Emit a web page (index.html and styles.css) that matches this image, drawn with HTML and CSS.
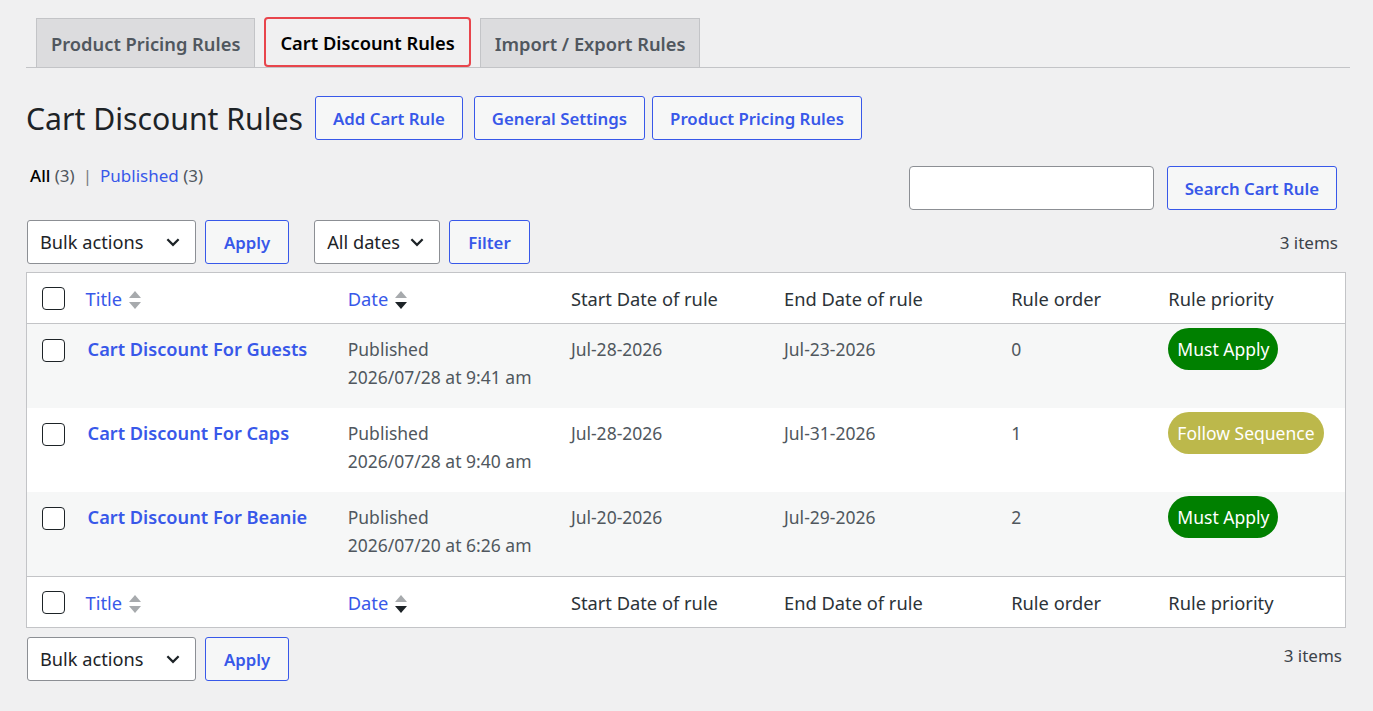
FILE: index.html
```html
<!DOCTYPE html>
<html lang="en">
<head>
  <meta charset="UTF-8" />
  <meta name="viewport" content="width=device-width, initial-scale=1.0"/>
  <title>Cart Discount Rules</title>
  <link rel="stylesheet" href="styles.css">
</head>
<body>
<div class="wrap">

  <!-- TABS -->
  <nav class="tabs">
    <a class="tab">Product Pricing Rules</a>
    <a class="tab tab-active">Cart Discount Rules</a>
    <a class="tab">Import / Export Rules</a>
  </nav>

  <!-- HEADING -->
  <div class="head">
    <h1>Cart Discount Rules</h1>
    <a class="btn">Add Cart Rule</a>
    <a class="btn">General Settings</a>
    <a class="btn">Product Pricing Rules</a>
  </div>

  <div class="views-row">
    <ul class="views">
      <li><b>All</b> <span class="count">(3)</span></li>
      <li class="sep">|</li>
      <li><a>Published</a> <span class="count">(3)</span></li>
    </ul>
    <div class="search">
      <input type="text" class="search-input">
      <a class="btn">Search Cart Rule</a>
    </div>
  </div>

  <!-- TOP NAV -->
  <div class="tablenav">
    <div class="actions">
      <div class="select sel-bulk">Bulk actions <svg class="chev" viewBox="0 0 16 16"><path d="M3 5.5l5 5 5-5" fill="none" stroke="#1d2327" stroke-width="2"/></svg></div>
      <a class="btn btn-sm">Apply</a>
      <div class="select sel-dates">All dates <svg class="chev" viewBox="0 0 16 16"><path d="M3 5.5l5 5 5-5" fill="none" stroke="#1d2327" stroke-width="2"/></svg></div>
      <a class="btn btn-sm">Filter</a>
    </div>
    <div class="num">3 items</div>
  </div>

  <!-- TABLE -->
  <table class="list">
    <colgroup>
      <col style="width:49px"><col style="width:262px"><col style="width:223px"><col style="width:213px"><col style="width:227px"><col style="width:157px"><col style="width:187px">
    </colgroup>
    <thead>
      <tr>
        <th class="cb"><span class="box"></span></th>
        <th><a>Title</a> <svg class="sort" viewBox="0 0 12 20"><path d="M6 1l6 7H0z" fill="#a7aaad"/><path d="M6 19l6-7H0z" fill="#a7aaad"/></svg></th>
        <th><a>Date</a> <svg class="sort" viewBox="0 0 12 20"><path d="M6 1l6 7H0z" fill="#a7aaad"/><path d="M6 19l6-7H0z" fill="#1d2327"/></svg></th>
        <th>Start Date of rule</th>
        <th>End Date of rule</th>
        <th>Rule order</th>
        <th>Rule priority</th>
      </tr>
    </thead>
    <tbody>
      <tr class="alt">
        <td class="cb"><span class="box"></span></td>
        <td><a class="row-title">Cart Discount For Guests</a></td>
        <td class="muted">Published<br>2026/07/28 at 9:41 am</td>
        <td class="muted">Jul-28-2026</td>
        <td class="muted">Jul-23-2026</td>
        <td class="muted">0</td>
        <td><span class="badge must">Must Apply</span></td>
      </tr>
      <tr>
        <td class="cb"><span class="box"></span></td>
        <td><a class="row-title">Cart Discount For Caps</a></td>
        <td class="muted">Published<br>2026/07/28 at 9:40 am</td>
        <td class="muted">Jul-28-2026</td>
        <td class="muted">Jul-31-2026</td>
        <td class="muted">1</td>
        <td><span class="badge follow">Follow Sequence</span></td>
      </tr>
      <tr class="alt">
        <td class="cb"><span class="box"></span></td>
        <td><a class="row-title">Cart Discount For Beanie</a></td>
        <td class="muted">Published<br>2026/07/20 at 6:26 am</td>
        <td class="muted">Jul-20-2026</td>
        <td class="muted">Jul-29-2026</td>
        <td class="muted">2</td>
        <td><span class="badge must">Must Apply</span></td>
      </tr>
    </tbody>
    <tfoot>
      <tr>
        <th class="cb"><span class="box"></span></th>
        <th><a>Title</a> <svg class="sort" viewBox="0 0 12 20"><path d="M6 1l6 7H0z" fill="#a7aaad"/><path d="M6 19l6-7H0z" fill="#a7aaad"/></svg></th>
        <th><a>Date</a> <svg class="sort" viewBox="0 0 12 20"><path d="M6 1l6 7H0z" fill="#a7aaad"/><path d="M6 19l6-7H0z" fill="#1d2327"/></svg></th>
        <th>Start Date of rule</th>
        <th>End Date of rule</th>
        <th>Rule order</th>
        <th>Rule priority</th>
      </tr>
    </tfoot>
  </table>

  <!-- BOTTOM NAV -->
  <div class="tablenav tablenav-bottom">
    <div class="actions">
      <div class="select sel-bulk">Bulk actions <svg class="chev" viewBox="0 0 16 16"><path d="M3 5.5l5 5 5-5" fill="none" stroke="#1d2327" stroke-width="2"/></svg></div>
      <a class="btn btn-sm">Apply</a>
    </div>
    <div class="num">3 items</div>
  </div>

</div>
</body>
</html>
```

FILE: styles.css
```css
body {
  font-family: "Noto Sans", "Open Sans", sans-serif;
  font-size: 17px;
  color: #3c434a;
  background-color: #f0f0f1;
  margin: 0;
}

a {
  color: #3858e9;
  text-decoration: none;
}

.wrap {
  padding: 18px 23px 0 26px;
}

/* tabs */
.tabs {
  display: flex;
  gap: 9px;
  padding-left: 10px;
  border-bottom: 1px solid #c3c4c7;
}

.tab {
  height: 49px;
  box-sizing: border-box;
  padding: 0 14px;
  display: flex;
  align-items: center;
  background: #dcdcde;
  border: 1px solid #c3c4c7;
  border-bottom: none;
  color: #50575e;
  font-weight: 600;
  font-size: 18.3px;
  margin-bottom: -1px;
}

.tab-active {
  background: #f0f0f1;
  color: #000;
  border: 2px solid #e8454c;
  border-radius: 4px;
  margin-bottom: 0;
  height: 50px;
  margin-top: -1px;
}

/* heading */
.head {
  display: flex;
  align-items: center;
  gap: 11px;
  margin-top: 28px;
}

h1 {
  font-size: 30.2px;
  font-weight: 400;
  color: #1d2327;
  margin: 0 1px 0 0;
}

.btn {
  display: inline-flex;
  align-items: center;
  height: 44px;
  box-sizing: border-box;
  padding: 0 17px;
  border: 1px solid #3858e9;
  border-radius: 3px;
  background: #f6f7f7;
  color: #3858e9;
  font-weight: 600;
  font-size: 16.8px;
}

.head .btn:last-child {
  margin-left: -4px;
}

.btn-sm {
  padding: 0 18px;
}

/* views + search */
.views-row {
  display: flex;
  justify-content: space-between;
  margin-top: 26px;
}

.views {
  list-style: none;
  margin: 0;
  padding: 0 0 0 4px;
  display: flex;
  gap: 8px;
  font-size: 17px;
  line-height: 20px;
}

.views b {
  color: #000;
  font-weight: 500;
}

.count {
  color: #50575e;
}

.sep {
  color: #787c82;
}

.search {
  display: flex;
  gap: 13px;
  margin-right: 13px;
}

.search-input {
  width: 245px;
  height: 44px;
  box-sizing: border-box;
  border: 1px solid #8c8f94;
  border-radius: 4px;
  background: #fff;
}

/* tablenav */
.tablenav {
  display: flex;
  justify-content: space-between;
  align-items: center;
  margin-top: 10px;
  height: 44px;
}

.actions {
  display: flex;
  gap: 9px;
  padding-left: 1px;
}

.select {
  display: flex;
  align-items: center;
  justify-content: space-between;
  height: 44px;
  box-sizing: border-box;
  background: #fff;
  border: 1px solid #8c8f94;
  border-radius: 3px;
  padding: 0 13px 0 12px;
  color: #1d2327;
  font-size: 18.2px;
}

.sel-bulk {
  width: 169px;
}

.sel-dates {
  width: 126px;
  margin-left: 16px;
}

.chev {
  width: 18px;
  height: 18px;
}

.num {
  font-size: 17px;
  color: #3c434a;
  margin-right: 12px;
}

.tablenav-bottom {
  margin-top: 9px;
}

.tablenav-bottom .num {
  margin-right: 8px;
  align-self: flex-start;
  margin-top: 7px;
}

/* table */
.list {
  width: 1320px;
  margin-top: 8px;
  border-collapse: collapse;
  table-layout: fixed;
  background: #fff;
  border: 1px solid #c3c4c7;
}

.list th {
  text-align: left;
  font-weight: 400;
  color: #2c3338;
  height: 50px;
  padding: 0 10px;
  font-size: 18.3px;
  white-space: nowrap;
}

.list thead tr {
  border-bottom: 1px solid #c3c4c7;
}

.list tfoot tr {
  border-top: 1px solid #c3c4c7;
}

.list td {
  vertical-align: top;
  padding: 11px 10px 0;
  height: 73px;
  line-height: 28px;
  font-size: 17.5px;
}

.list tr.alt td {
  background: #f6f7f7;
}

.list .cb {
  padding-left: 15px;
  padding-right: 0;
}

.box {
  display: block;
  width: 21px;
  height: 21px;
  border: 1px solid #1d2327;
  border-radius: 4px;
  background: #fff;
}

.list td .box {
  margin-top: 4px;
}

.list th .box {
  margin-top: 1px;
}

.sort {
  width: 12px;
  height: 20px;
  vertical-align: -4px;
  margin-left: 2px;
}

.row-title {
  font-weight: 600;
  font-size: 18.2px;
  margin-left: 2px;
}

.muted {
  color: #50575e;
}

.badge {
  display: inline-block;
  margin-top: -7px;
  padding: 7px 9px;
  border-radius: 21px;
  color: #fff;
  line-height: 28px;
  font-size: 17.5px;
}

.must {
  background: #008000;
}

.follow {
  background: #bcb84b;
}
```
